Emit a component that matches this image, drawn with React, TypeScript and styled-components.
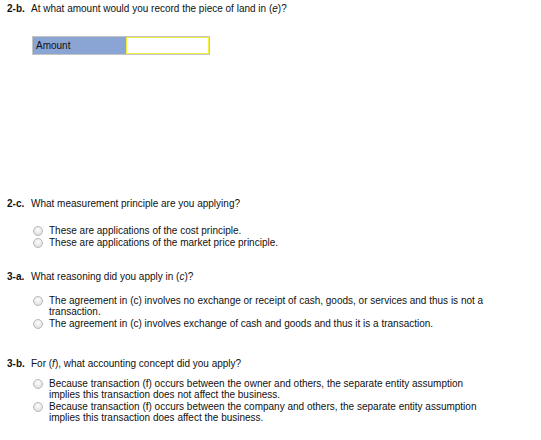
import styled, { createGlobalStyle } from 'styled-components';

const GlobalStyle = createGlobalStyle`
    body {
        margin: 0;
        background: #fff;
        font-family: 'Liberation Sans', Arial, sans-serif;
        color: #111;
    }
`;

const Page = styled.div`
    padding: 3px 7px 0;
    width: 541px;
    box-sizing: border-box;
`;

const Section = styled.div<{ $gap: number }>`
    margin-bottom: ${(p) => p.$gap}px;
`;

const Question = styled.div`
    display: flex;
    font-size: 10px;
    line-height: 12px;
`;

const Num = styled.b`
    width: 24px;
    flex-shrink: 0;
`;

const AnswerTable = styled.div`
    display: flex;
    margin: 21px 0 0 25px;
    width: 178px;
    height: 19px;
    border: 1px solid #c4c4c4;
    box-sizing: border-box;
`;

const Label = styled.div`
    width: 93px;
    flex-shrink: 0;
    background: #8aa4d4;
    font-size: 10px;
    line-height: 17px;
    padding-left: 3px;
    box-sizing: border-box;
`;

const Input = styled.input`
    flex: 1;
    width: 0;
    min-width: 0;
    margin: 0;
    padding: 0;
    box-sizing: border-box;
    border: 1px solid #f5f03a;
    outline: none;
    background: #fff;
`;

const Options = styled.div<{ $top: number }>`
    margin: ${(p) => p.$top}px 0 0 26px;
    display: flex;
    flex-direction: column;
`;

const Option = styled.label`
    display: flex;
    align-items: flex-start;
    font-size: 10px;
    line-height: 11px;
    margin-bottom: 1px;
`;

const Radio = styled.span`
    width: 8px;
    height: 8px;
    margin: 1px 6px 0 0;
    border-radius: 50%;
    flex-shrink: 0;
    border: 1px solid #b8b8b8;
    background: radial-gradient(circle at 50% 35%, #fdfdfd, #d8d8d8);
`;

const Text = styled.span`
    max-width: 442px;
`;

const Sub = ({ num, text }: { num: string; text: React.ReactNode }) => (
    <Question>
        <Num>{num}</Num>
        <span>{text}</span>
    </Question>
);

export default function App() {
    return (
        <Page>
            <GlobalStyle />
            <Section $gap={143}>
                <Sub num="2-b." text={<>At what amount would you record the piece of land in (<i>e</i>)?</>} />
                <AnswerTable>
                    <Label>Amount</Label>
                    <Input />
                </AnswerTable>
            </Section>
            <Section $gap={22}>
                <Sub num="2-c." text="What measurement principle are you applying?" />
                <Options $top={15}>
                    <Option><Radio /><Text>These are applications of the cost principle.</Text></Option>
                    <Option><Radio /><Text>These are applications of the market price principle.</Text></Option>
                </Options>
            </Section>
            <Section $gap={28}>
                <Sub num="3-a." text={<>What reasoning did you apply in (<i>c</i>)?</>} />
                <Options $top={12}>
                    <Option>
                        <Radio />
                        <Text>The agreement in (c) involves no exchange or receipt of cash, goods, or services and thus is not a transaction.</Text>
                    </Option>
                    <Option>
                        <Radio />
                        <Text>The agreement in (c) involves exchange of cash and goods and thus it is a transaction.</Text>
                    </Option>
                </Options>
            </Section>
            <Section $gap={0}>
                <Sub num="3-b." text={<>For (<i>f</i>), what accounting concept did you apply?</>} />
                <Options $top={8}>
                    <Option>
                        <Radio />
                        <Text>Because transaction (f) occurs between the owner and others, the separate entity assumption implies this transaction does not affect the business.</Text>
                    </Option>
                    <Option>
                        <Radio />
                        <Text>Because transaction (f) occurs between the company and others, the separate entity assumption implies this transaction does affect the business.</Text>
                    </Option>
                </Options>
            </Section>
        </Page>
    );
}
